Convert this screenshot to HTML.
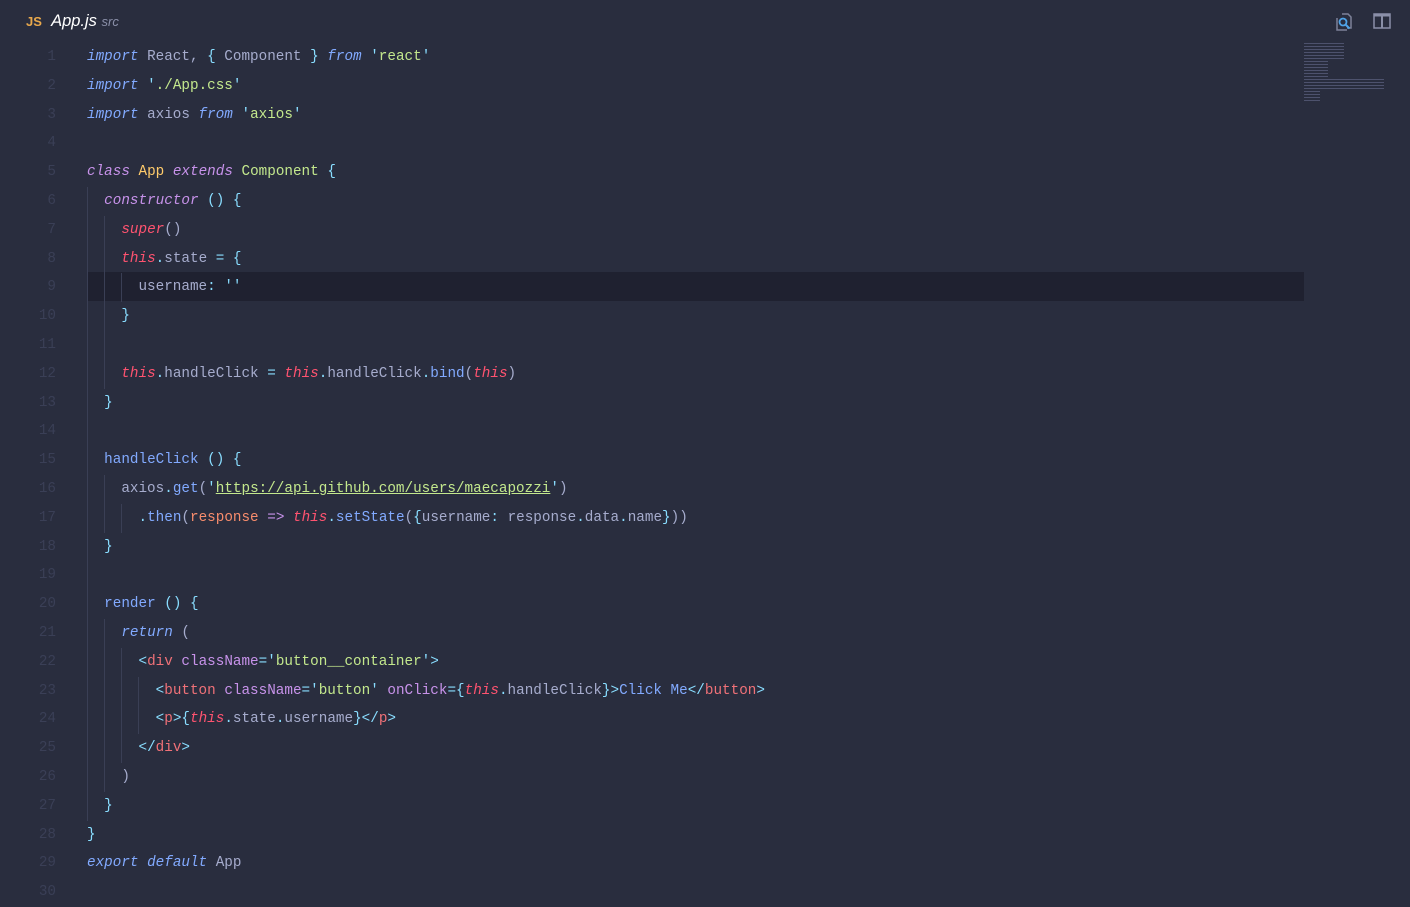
<!DOCTYPE html>
<html><head><meta charset="utf-8"><style>
body{margin:0;width:1410px;height:900px;background:#292d3e;overflow:hidden;position:relative;font-family:"Liberation Mono",monospace;}
.l{position:absolute;left:0;width:1304px;height:29px;line-height:29px;font-size:14.3px;color:#a6accd;white-space:pre;background-repeat:no-repeat;margin-top:2px;}
.n{position:absolute;left:0;width:56px;text-align:right;color:#3a3f56;}
.c{position:absolute;left:87px;}
.g1{background-image:linear-gradient(#3a3f55,#3a3f55);background-size:1px 29px;background-position:87px 0;}
.g2{background-image:linear-gradient(#3a3f55,#3a3f55),linear-gradient(#3a3f55,#3a3f55);background-size:1px 29px;background-position:87px 0,104px 0;}
.g3{background-image:linear-gradient(#3a3f55,#3a3f55),linear-gradient(#3a3f55,#3a3f55),linear-gradient(#3a3f55,#3a3f55);background-size:1px 29px;background-position:87px 0,104px 0,121px 0;}
.g4{background-image:linear-gradient(#3a3f55,#3a3f55),linear-gradient(#3a3f55,#3a3f55),linear-gradient(#3a3f55,#3a3f55),linear-gradient(#3a3f55,#3a3f55);background-size:1px 29px;background-position:87px 0,104px 0,121px 0,138px 0;}
.hl{position:absolute;left:87px;top:272px;width:1217px;height:29px;background:#1f2130;}
.k{color:#82aaff;font-style:italic}
.p{color:#c792ea;font-style:italic}
.t{color:#ff5370;font-style:italic}
.s{color:#c3e88d}
.b{color:#89ddff}
.f{color:#82aaff}
.y{color:#ffcb6b}
.o{color:#f78c6c}
.r{color:#f07178}
.a{color:#c792ea}
.u{text-decoration:underline}
</style></head><body>
<div style="position:absolute;left:26px;top:12px;font-family:'Liberation Sans',sans-serif;font-size:16.5px;color:#fff;">
<span style="color:#e8a84c;font-weight:bold;font-size:13px;">JS</span>&nbsp; <i>App.js</i> <i style="font-size:13px;color:#8a8fa8;">src</i></div>
<svg style="position:absolute;left:1334px;top:12px" width="20" height="20" viewBox="0 0 20 20" fill="none">
<path d="M8 2h6l3 3v11h-4M3 6v12h10" stroke="#7d8299" stroke-width="1.5"/><circle cx="9" cy="10" r="3.5" stroke="#4fa3e8" stroke-width="1.8"/><path d="M11.5 12.5l4 4" stroke="#4fa3e8" stroke-width="2"/></svg>
<svg style="position:absolute;left:1373px;top:13px" width="18" height="16" viewBox="0 0 18 16" fill="none">
<rect x="1" y="1" width="16" height="14" stroke="#8a8fa8" stroke-width="1.5"/><path d="M9 1v14M1 2.5h16" stroke="#8a8fa8" stroke-width="2"/></svg>
<div class="hl"></div>
<div class="l" style="top:41px"><span class="n">1</span><span class="c"><span class="k">import</span> React, <span class="b">{</span> Component <span class="b">}</span> <span class="k">from</span> <span class="b">'</span><span class="s">react</span><span class="b">'</span></span></div>
<div class="l" style="top:70px"><span class="n">2</span><span class="c"><span class="k">import</span> <span class="b">'</span><span class="s">./App.css</span><span class="b">'</span></span></div>
<div class="l" style="top:99px"><span class="n">3</span><span class="c"><span class="k">import</span> axios <span class="k">from</span> <span class="b">'</span><span class="s">axios</span><span class="b">'</span></span></div>
<div class="l" style="top:127px"><span class="n">4</span></div>
<div class="l" style="top:156px"><span class="n">5</span><span class="c"><span class="p">class</span> <span class="y">App</span> <span class="p">extends</span> <span class="s">Component</span> <span class="b">{</span></span></div>
<div class="l g1" style="top:185px"><span class="n">6</span><span class="c">  <span class="p">constructor</span> <span class="b">() {</span></span></div>
<div class="l g2" style="top:214px"><span class="n">7</span><span class="c">    <span class="t">super</span>()</span></div>
<div class="l g2" style="top:243px"><span class="n">8</span><span class="c">    <span class="t">this</span><span class="b">.</span>state <span class="b">= {</span></span></div>
<div class="l g3" style="top:271px"><span class="n">9</span><span class="c">      username<span class="b">:</span> <span class="b">''</span></span></div>
<div class="l g2" style="top:300px"><span class="n">10</span><span class="c">    <span class="b">}</span></span></div>
<div class="l g2" style="top:329px"><span class="n">11</span></div>
<div class="l g2" style="top:358px"><span class="n">12</span><span class="c">    <span class="t">this</span><span class="b">.</span>handleClick <span class="b">=</span> <span class="t">this</span><span class="b">.</span>handleClick<span class="b">.</span><span class="f">bind</span>(<span class="t">this</span>)</span></div>
<div class="l g1" style="top:387px"><span class="n">13</span><span class="c">  <span class="b">}</span></span></div>
<div class="l g1" style="top:415px"><span class="n">14</span></div>
<div class="l g1" style="top:444px"><span class="n">15</span><span class="c">  <span class="f">handleClick</span> <span class="b">() {</span></span></div>
<div class="l g2" style="top:473px"><span class="n">16</span><span class="c">    axios<span class="b">.</span><span class="f">get</span>(<span class="b">'</span><span class="s u">https://api.github.com/users/maecapozzi</span><span class="b">'</span>)</span></div>
<div class="l g3" style="top:502px"><span class="n">17</span><span class="c">      <span class="b">.</span><span class="f">then</span>(<span class="o">response</span> <span class="p" style="font-style:normal">=&gt;</span> <span class="t">this</span><span class="b">.</span><span class="f">setState</span>(<span class="b">{</span>username<span class="b">:</span> response<span class="b">.</span>data<span class="b">.</span>name<span class="b">}</span>))</span></div>
<div class="l g1" style="top:531px"><span class="n">18</span><span class="c">  <span class="b">}</span></span></div>
<div class="l g1" style="top:559px"><span class="n">19</span></div>
<div class="l g1" style="top:588px"><span class="n">20</span><span class="c">  <span class="f">render</span> <span class="b">() {</span></span></div>
<div class="l g2" style="top:617px"><span class="n">21</span><span class="c">    <span class="k">return</span> (</span></div>
<div class="l g3" style="top:646px"><span class="n">22</span><span class="c">      <span class="b">&lt;</span><span class="r">div</span> <span class="a">className</span><span class="b">='</span><span class="s">button__container</span><span class="b">'&gt;</span></span></div>
<div class="l g4" style="top:675px"><span class="n">23</span><span class="c">        <span class="b">&lt;</span><span class="r">button</span> <span class="a">className</span><span class="b">='</span><span class="s">button</span><span class="b">'</span> <span class="a">onClick</span><span class="b">={</span><span class="t">this</span><span class="b">.</span>handleClick<span class="b">}&gt;</span><span class="f">Click Me</span><span class="b">&lt;/</span><span class="r">button</span><span class="b">&gt;</span></span></div>
<div class="l g4" style="top:703px"><span class="n">24</span><span class="c">        <span class="b">&lt;</span><span class="r">p</span><span class="b">&gt;{</span><span class="t">this</span><span class="b">.</span>state<span class="b">.</span>username<span class="b">}&lt;/</span><span class="r">p</span><span class="b">&gt;</span></span></div>
<div class="l g3" style="top:732px"><span class="n">25</span><span class="c">      <span class="b">&lt;/</span><span class="r">div</span><span class="b">&gt;</span></span></div>
<div class="l g2" style="top:761px"><span class="n">26</span><span class="c">    )</span></div>
<div class="l g1" style="top:790px"><span class="n">27</span><span class="c">  <span class="b">}</span></span></div>
<div class="l" style="top:819px"><span class="n">28</span><span class="c"><span class="b">}</span></span></div>
<div class="l" style="top:847px"><span class="n">29</span><span class="c"><span class="k">export</span> <span class="k">default</span> App</span></div>
<div class="l" style="top:876px"><span class="n">30</span></div>
<div style="position:absolute;left:1304px;top:42px;width:80px;height:60px;opacity:.55;background:repeating-linear-gradient(#292d3e 0 1px,#6b7194 1px 2px,#292d3e 2px 3px);clip-path:polygon(0 0,50% 0,50% 30%,30% 30%,30% 60%,100% 60%,100% 80%,20% 80%,20% 100%,0 100%);"></div>
</body></html>
